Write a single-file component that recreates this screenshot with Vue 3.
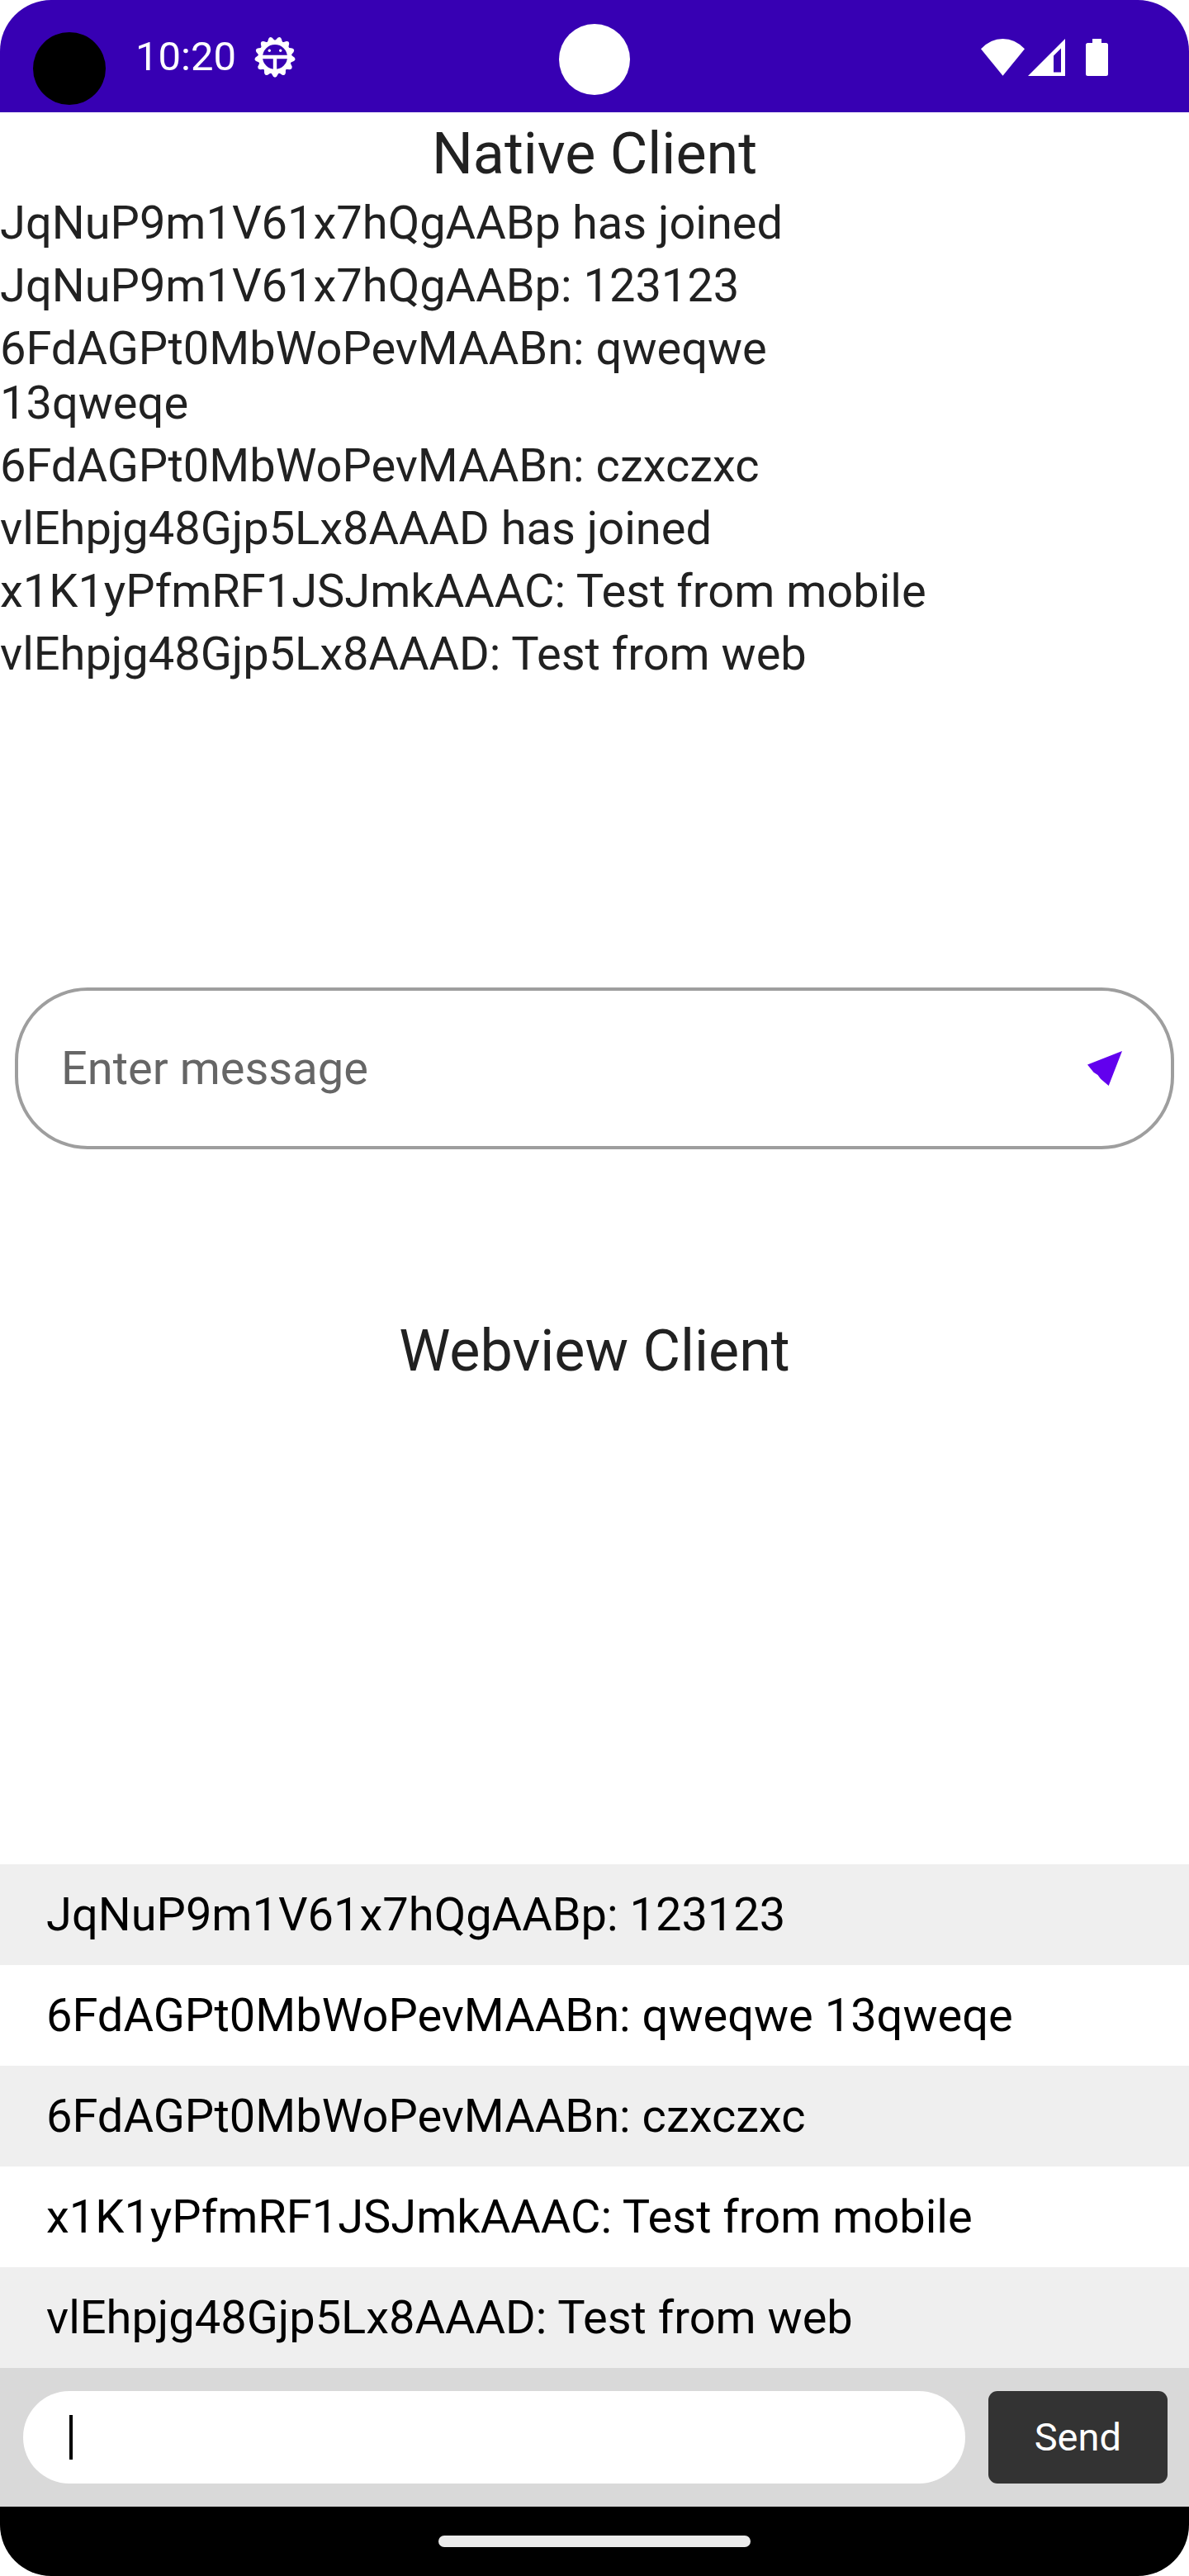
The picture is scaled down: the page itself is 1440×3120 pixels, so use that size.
<script setup>
import { ref } from 'vue'

const nativeMessages = [
  'JqNuP9m1V61x7hQgAABp has joined',
  'JqNuP9m1V61x7hQgAABp: 123123',
  '6FdAGPt0MbWoPevMAABn: qweqwe\n13qweqe',
  '6FdAGPt0MbWoPevMAABn: czxczxc',
  'vlEhpjg48Gjp5Lx8AAAD has joined',
  'x1K1yPfmRF1JSJmkAAAC: Test from mobile',
  'vlEhpjg48Gjp5Lx8AAAD: Test from web',
]

const webMessages = [
  'JqNuP9m1V61x7hQgAABp: 123123',
  '6FdAGPt0MbWoPevMAABn: qweqwe 13qweqe',
  '6FdAGPt0MbWoPevMAABn: czxczxc',
  'x1K1yPfmRF1JSJmkAAAC: Test from mobile',
  'vlEhpjg48Gjp5Lx8AAAD: Test from web',
]

const gearTeeth = Array.from({ length: 13 }, (_, i) => (i * 360) / 13)

const nativeDraft = ref('')
const webDraft = ref('')
</script>

<template>
  <div class="device">
    <header class="status-bar">
      <span class="recorder-dot"></span>
      <span class="camera-hole"></span>
      <div class="status-left">
        <time class="clock">10:20</time>
        <svg class="gear" viewBox="-25 -25 50 50" aria-hidden="true">
          <circle r="17.700" fill="none" stroke="#fff" stroke-width="5.400" />
          <path
            v-for="angle in gearTeeth"
            :key="angle"
            d="M-4.800 19 L-2.300 23.300 Q0 26 2.300 23.300 L4.800 19Z"
            fill="#fff"
            :transform="`rotate(${angle})`"
          />
          <path d="M-17 0H17M0 0V17" fill="none" stroke="#fff" stroke-width="4.400" />
          <circle cx="-6.700" cy="-7.700" r="1.700" fill="#fff" />
          <circle cx="6.700" cy="-7.700" r="1.700" fill="#fff" />
        </svg>
      </div>
      <div class="status-right">
        <svg class="wifi" viewBox="0 0 53 45" aria-hidden="true">
          <path d="M0 12.300Q11.500 0 26.500 0T53 12.300L26.500 44.700Z" fill="#fff" />
        </svg>
        <svg class="signal" viewBox="0 0 45 45" aria-hidden="true">
          <path d="M0 45L45 0V45ZM31 20.500V40.500H40V11.500Z" fill="#fff" fill-rule="evenodd" />
        </svg>
        <svg class="battery" viewBox="0 0 27 45" aria-hidden="true">
          <path d="M8 0H19V5H24.500Q27 5 27 7.500V42.500Q27 45 24.500 45H2.500Q0 45 0 42.500V7.500Q0 5 2.500 5H8Z" fill="#fff" />
        </svg>
      </div>
    </header>

    <main class="clients">
      <section class="client">
        <h1 class="title">Native Client</h1>
        <ul class="native-list">
          <li v-for="message in nativeMessages" :key="message">{{ message }}</li>
        </ul>
        <div class="composer-area">
          <form class="native-composer" @submit.prevent>
            <input v-model="nativeDraft" type="text" placeholder="Enter message" aria-label="Enter message" />
            <button type="submit" aria-label="Send message">
              <svg viewBox="0 0 42 42" aria-hidden="true">
                <path d="M42 0L25.700 42L16 33.700L12.500 29L7.500 25.700L0 16.500Z" fill="#6200ee" />
              </svg>
            </button>
          </form>
        </div>
      </section>

      <section class="client">
        <h1 class="title">Webview Client</h1>
        <div class="webview">
          <ul class="web-list">
            <li v-for="message in webMessages" :key="message">{{ message }}</li>
          </ul>
          <form class="web-composer" @submit.prevent>
            <div class="field">
              <input v-model="webDraft" type="text" aria-label="Message" />
              <span class="caret"></span>
            </div>
            <button type="submit">Send</button>
          </form>
        </div>
      </section>
    </main>

    <footer class="nav-bar"><span class="nav-handle"></span></footer>
  </div>
</template>

<style>
body {
  margin: 0;
  background: #fff;
}
</style>

<style scoped>
.device {
  display: flex;
  flex-direction: column;
  min-height: 100vh;
  overflow: hidden;
  border-radius: 62px;
  background: #fff;
  color: #212121;
  font-family: Roboto, "Noto Sans", sans-serif;
  font-size: 56px;
  line-height: 66px;
}

ul {
  margin: 0;
  padding: 0;
  list-style: none;
}

input,
button {
  border: 0;
  margin: 0;
  padding: 0;
  background: none;
  font: inherit;
  outline: none;
}

.status-bar {
  position: relative;
  display: flex;
  align-items: center;
  justify-content: space-between;
  height: 136px;
  padding: 2px 98px 0 164px;
  box-sizing: border-box;
  background: #3700b3;
  color: #fff;
}

.recorder-dot,
.camera-hole {
  position: absolute;
  border-radius: 50%;
}

.recorder-dot {
  left: 40px;
  top: 39px;
  width: 88px;
  height: 88px;
  background: #000;
}

.camera-hole {
  left: 50%;
  top: 29px;
  width: 86px;
  height: 86px;
  margin-left: -43px;
  background: #fff;
}

.status-left,
.status-right {
  display: flex;
  align-items: center;
}

.status-left {
  gap: 22px;
}

.clock {
  font-size: 49px;
}

.gear {
  width: 50px;
  height: 50px;
}

.wifi {
  width: 53px;
  height: 45px;
  margin-right: 4px;
}

.signal {
  width: 45px;
  height: 45px;
  margin-right: 25px;
}

.battery {
  width: 27px;
  height: 45px;
}

.clients {
  flex: 1;
  display: flex;
  flex-direction: column;
}

.client {
  flex: 1 1 0;
  display: flex;
  flex-direction: column;
}

.title {
  margin: 0;
  padding: 9px 0 5px;
  font-size: 70px;
  font-weight: 400;
  line-height: 82px;
  text-align: center;
}

.native-list {
  flex: 4 1 0;
}

.native-list li {
  padding: 5px 0;
  white-space: pre-line;
}

.composer-area {
  flex: 3 1 0;
  display: flex;
  align-items: center;
  padding: 0 18px 2px;
}

.native-composer {
  flex: 1;
  display: flex;
  align-items: center;
  height: 196px;
  padding: 0 59px 0 52px;
  box-sizing: border-box;
  border: 4px solid #9e9e9e;
  border-radius: 88px;
}

.native-composer input {
  flex: 1;
  min-width: 0;
  color: #212121;
}

.native-composer input::placeholder {
  color: #666;
  opacity: 1;
}

.native-composer button,
.native-composer svg {
  display: block;
  width: 42px;
  height: 42px;
}

.webview {
  flex: 1;
  display: flex;
  flex-direction: column;
  justify-content: flex-end;
  color: #000;
}

.web-list li {
  padding: 28px 56px;
}

.web-list li:nth-child(odd) {
  background: #efefef;
}

.web-composer {
  display: flex;
  gap: 28px;
  padding: 28px 26px 28px 28px;
  background: #d9d9d9;
}

.field {
  position: relative;
  flex: 1;
  display: flex;
}

.field input {
  flex: 1;
  min-width: 0;
  height: 112px;
  padding: 0 56px;
  border-radius: 56px;
  background: #fff;
  color: #000;
}

.caret {
  position: absolute;
  left: 56px;
  top: 29px;
  width: 4px;
  height: 54px;
  background: #000;
}

.web-composer button {
  padding: 0 56px;
  border-radius: 11px;
  background: #333;
  color: #fff;
  font-size: 47px;
}

.nav-bar {
  display: flex;
  align-items: center;
  justify-content: center;
  height: 84px;
  background: #000;
}

.nav-handle {
  width: 378px;
  height: 14px;
  border-radius: 7px;
  background: #ebebeb;
}
</style>
